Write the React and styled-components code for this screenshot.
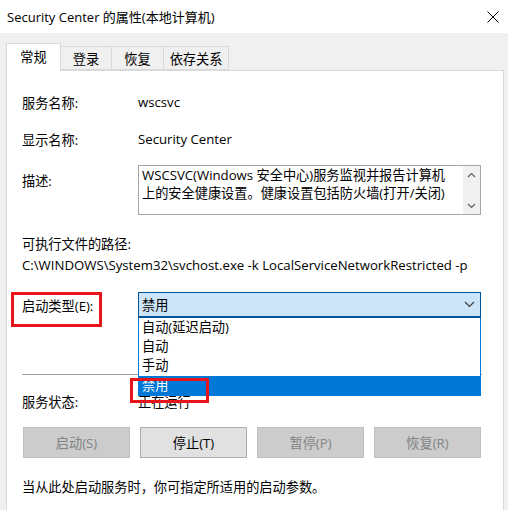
import React from "react";
import styled, { createGlobalStyle } from "styled-components";

const GlobalStyle = createGlobalStyle`
  html, body {
    margin: 0;
    padding: 0;
    background: #f0f0f0;
  }
  body {
    font-family: "Open Sans", "Noto Sans CJK SC", sans-serif;
    font-size: 13.2px;
    color: #000;
  }
`;

const Window = styled.div`
  width: 508px;
  height: 510px;
  display: flex;
  flex-direction: column;
  overflow: hidden;
  background: #f0f0f0;
`;

const TitleBar = styled.div`
  height: 33px;
  flex: none;
  background: #fff;
  display: flex;
  align-items: center;
  justify-content: space-between;
  padding: 0 8px 0 7px;
`;

const Title = styled.span`
  font-size: 13px;
  color: #000;
`;

const CloseBtn = styled.div`
  width: 14px;
  height: 14px;
  display: flex;
  align-items: center;
  justify-content: center;
`;

const Body = styled.div`
  flex: 1;
  display: flex;
  flex-direction: column;
  padding: 10px 4px 0 6px;
`;

const TabList = styled.div`
  display: flex;
  align-items: flex-end;
  height: 27px;
  flex: none;
  position: relative;
  z-index: 1;
`;

const Tab = styled.div`
  height: ${(p) => (p.$active ? 28 : 24)}px;
  width: ${(p) => p.$w}px;
  box-sizing: border-box;
  border: 1px solid #d9d9d9;
  border-bottom: ${(p) => (p.$active ? "none" : "1px solid #d9d9d9")};
  border-left: ${(p) => (p.$first || p.$active ? "1px solid #d9d9d9" : "none")};
  background: ${(p) => (p.$active ? "#fff" : "#f0f0f0")};
  margin-bottom: ${(p) => (p.$active ? -1 : 0)}px;
  display: flex;
  align-items: center;
  justify-content: center;
  padding-bottom: ${(p) => (p.$active ? 3 : 0)}px;
`;

const Panel = styled.div`
  flex: 1;
  background: #fff;
  border: 1px solid #d9d9d9;
  border-bottom: none;
  padding: 0 21px 0 15px;
  display: flex;
  flex-direction: column;
`;

const Row = styled.div`
  display: flex;
  align-items: ${(p) => (p.$top ? "flex-start" : "center")};
  min-height: 20px;
  margin-top: ${(p) => p.$mt}px;
  position: relative;
`;

const Label = styled.div`
  width: ${(p) => (p.$auto ? "auto" : "116px")};
  flex: none;
  padding-top: ${(p) => p.$pt || 0}px;
`;

const Value = styled.div`
  flex: 1;
  min-width: 0;
`;

const PathText = styled.div`
  margin-top: ${(p) => p.$mt}px;
  height: 20px;
  line-height: 20px;
  white-space: nowrap;
  overflow: hidden;
  margin-right: -3px;
`;

const DescBox = styled.div`
  width: 343px;
  height: 50px;
  box-sizing: border-box;
  border: 1px solid #a5a5a5;
  display: flex;
`;

const DescText = styled.div`
  flex: 1;
  padding: 0 3px;
  line-height: 18px;
  white-space: nowrap;
  overflow: hidden;
`;

const ScrollBar = styled.div`
  width: 17px;
  flex: none;
  background: #f0f0f0;
  display: flex;
  flex-direction: column;
  justify-content: space-between;
  align-items: center;
  padding: 6px 0 5px;
`;

const Select = styled.div`
  width: 343px;
  height: 26px;
  box-sizing: border-box;
  background: #cce4f7;
  border: 1px solid #005499;
  border-bottom-width: 2px;
  display: flex;
  align-items: center;
  justify-content: space-between;
  padding: 0 5px 0 3px;
`;

const DropWrap = styled.div`
  position: relative;
  flex: none;
`;

const DropList = styled.div`
  position: absolute;
  left: 0;
  top: 26px;
  width: 343px;
  box-sizing: border-box;
  background: #fff;
  border: 1px solid #0078d7;
  border-top: none;
  z-index: 2;
`;

const Option = styled.div`
  height: 19.2px;
  line-height: 19px;
  padding-left: 3px;
  background: ${(p) => (p.$sel ? "#0078d7" : "#fff")};
  color: ${(p) => (p.$sel ? "#fff" : "#000")};
`;

const RedBox = styled.div`
  position: absolute;
  left: ${(p) => p.$x}px;
  top: ${(p) => p.$y}px;
  width: ${(p) => p.$w}px;
  height: ${(p) => p.$h}px;
  box-sizing: border-box;
  border: 3px solid #e8141c;
  z-index: 3;
  pointer-events: none;
`;

const Separator = styled.div`
  height: 1px;
  background: #a0a0a0;
  margin-top: 56px;
`;

const ButtonRow = styled.div`
  display: grid;
  grid-template-columns: repeat(4, 1fr);
  column-gap: 10px;
  margin: 16px 0 0 1px;
  width: 458px;
`;

const Button = styled.div`
  height: 31px;
  box-sizing: border-box;
  display: flex;
  align-items: center;
  justify-content: center;
  border: 1px solid ${(p) => (p.$disabled ? "#bfbfbf" : "#adadad")};
  background: ${(p) => (p.$disabled ? "#cccccc" : "#e1e1e1")};
  color: ${(p) => (p.$disabled ? "#838383" : "#000")};
`;

const Note = styled.div`
  margin-top: 19px;
  height: 20px;
  line-height: 20px;
`;

const Chevron = ({ up }) => (
  <svg width="9" height="6" viewBox="0 0 9 6">
    <polyline
      points={up ? "1,5 4.5,1.5 8,5" : "1,1 4.5,4.5 8,1"}
      fill="none"
      stroke="#606060"
      strokeWidth="1.2"
    />
  </svg>
);

const tabs = [
  { name: "常规", w: 55 },
  { name: "登录", w: 51 },
  { name: "恢复", w: 52 },
  { name: "依存关系", w: 65 },
];

const options = ["自动(延迟启动)", "自动", "手动", "禁用"];

export default function App() {
  return (
    <Window>
      <GlobalStyle />
      <TitleBar>
        <Title>Security Center 的属性(本地计算机)</Title>
        <CloseBtn>
          <svg width="12" height="12" viewBox="0 0 12 12">
            <path d="M0.5 0.5 L11.5 11.5 M11.5 0.5 L0.5 11.5" stroke="#000" strokeWidth="1" />
          </svg>
        </CloseBtn>
      </TitleBar>
      <Body>
        <TabList>
          {tabs.map((t, i) => (
            <Tab key={t.name} $w={t.w} $active={i === 0} $first={i === 0}>
              {t.name}
            </Tab>
          ))}
        </TabList>
        <Panel>
          <Row $mt={21}>
            <Label>服务名称:</Label>
            <Value>wscsvc</Value>
          </Row>
          <Row $mt={17}>
            <Label>显示名称:</Label>
            <Value>Security Center</Value>
          </Row>
          <Row $mt={16} $top>
            <Label $pt={6}>描述:</Label>
            <DescBox>
              <DescText>
                WSCSVC(Windows 安全中心)服务监视并报告计算机
                <br />
                上的安全健康设置。健康设置包括防火墙(打开/关闭)
              </DescText>
              <ScrollBar>
                <Chevron up />
                <Chevron />
              </ScrollBar>
            </DescBox>
          </Row>
          <Row $mt={18}>
            <Label $auto>可执行文件的路径:</Label>
          </Row>
          <PathText $mt={2}>
            C:\WINDOWS\System32\svchost.exe -k LocalServiceNetworkRestricted -p
          </PathText>
          <Row $mt={17}>
            <RedBox $x={-11} $y={0} $w={91} $h={35} />
            <Label>启动类型(E):</Label>
            <DropWrap>
              <Select>
                <span>禁用</span>
                <svg width="11" height="7" viewBox="0 0 11 7">
                  <polyline points="1,1 5.5,5.5 10,1" fill="none" stroke="#3c3c3c" strokeWidth="1.2" />
                </svg>
              </Select>
              <DropList>
                {options.map((o) => (
                  <Option key={o} $sel={o === "禁用"}>
                    {o}
                  </Option>
                ))}
              </DropList>
              <RedBox $x={-8} $y={86} $w={79} $h={25} />
            </DropWrap>
          </Row>
          <Separator />
          <Row $mt={16}>
            <Label>服务状态:</Label>
            <Value>正在运行</Value>
          </Row>
          <ButtonRow>
            <Button $disabled>启动(S)</Button>
            <Button>停止(T)</Button>
            <Button $disabled>暂停(P)</Button>
            <Button $disabled>恢复(R)</Button>
          </ButtonRow>
          <Note>当从此处启动服务时，你可指定所适用的启动参数。</Note>
        </Panel>
      </Body>
    </Window>
  );
}
